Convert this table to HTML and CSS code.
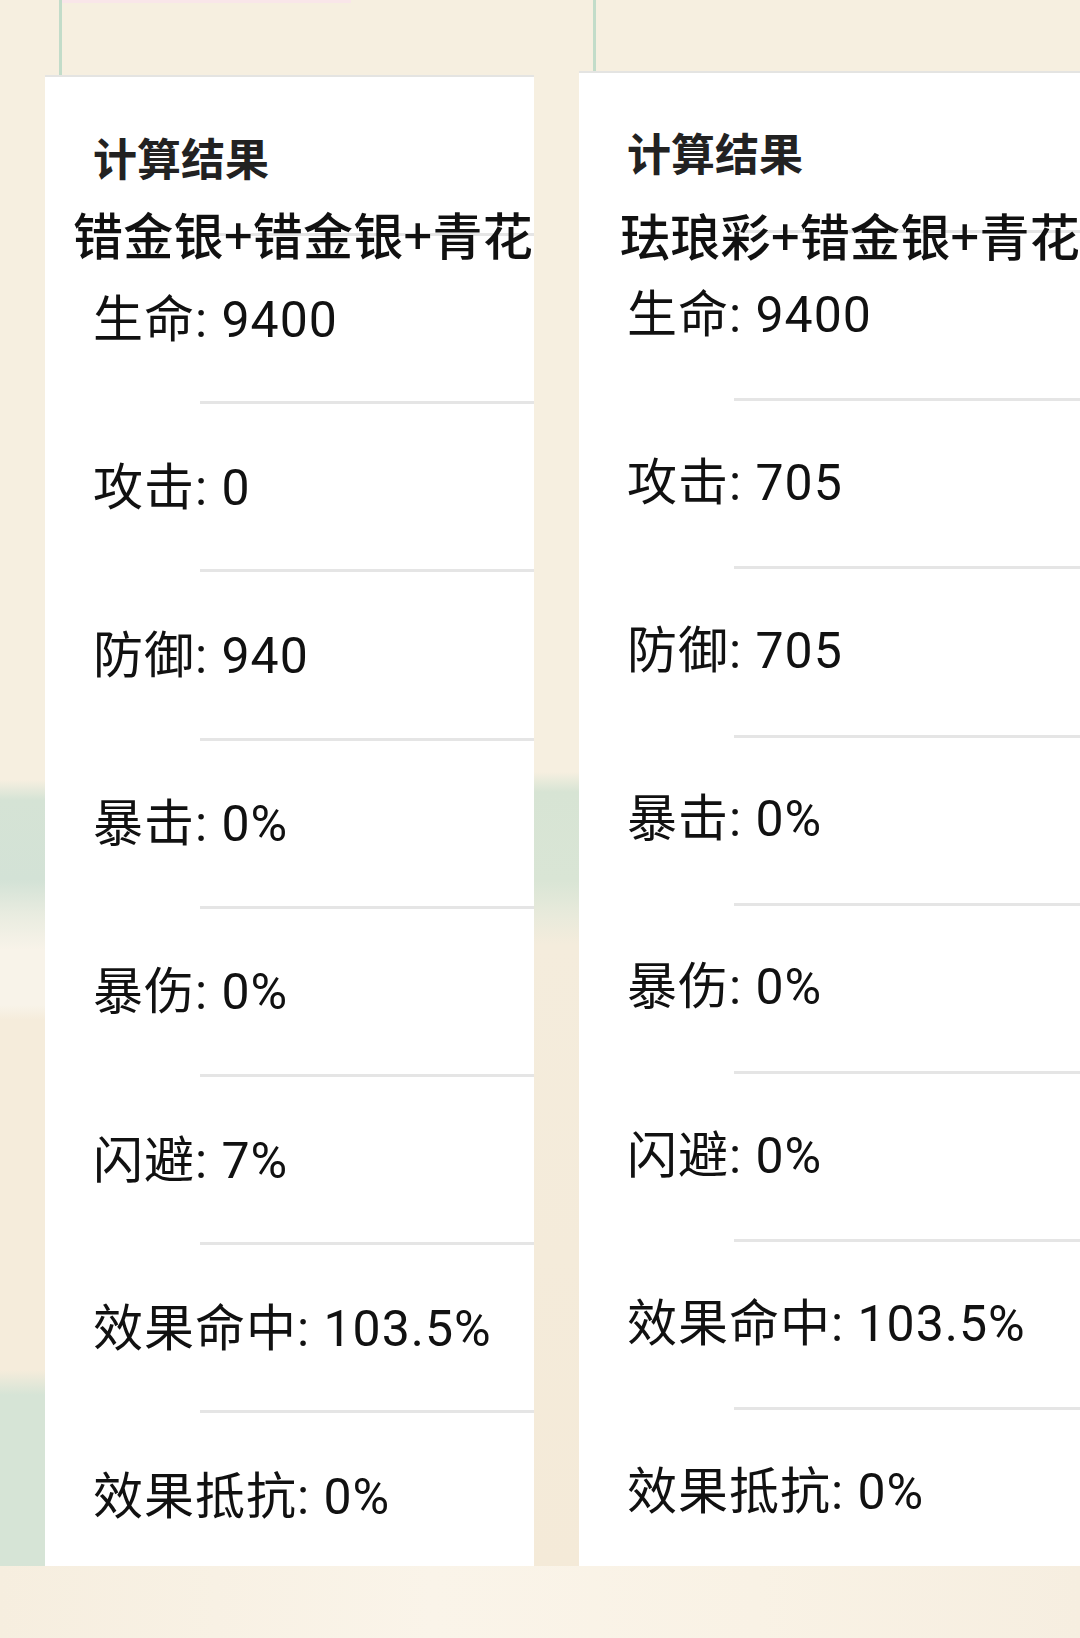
FILE: index.html
```html
<!DOCTYPE html>
<html lang="zh-CN">
<head>
<meta charset="utf-8">
<title>计算结果</title>
<link rel="stylesheet" href="styles.css">
</head>
<body>
<div class="page">
  <div class="col col-left">
    <div class="top-panel top-left"><div class="pink-edge"></div></div>
    <section class="card">
      <h2 class="title">计算结果</h2>
      <div class="combo">错金银+错金银+青花</div>
      <ul class="stats">
        <li class="stat">生命: 9400</li>
        <li class="stat">攻击: 0</li>
        <li class="stat">防御: 940</li>
        <li class="stat">暴击: 0%</li>
        <li class="stat">暴伤: 0%</li>
        <li class="stat">闪避: 7%</li>
        <li class="stat">效果命中: 103.5%</li>
        <li class="stat">效果抵抗: 0%</li>
      </ul>
    </section>
  </div>
  <div class="col col-right">
    <div class="top-panel top-right"></div>
    <section class="card card-right">
      <h2 class="title">计算结果</h2>
      <div class="combo">珐琅彩+错金银+青花</div>
      <ul class="stats">
        <li class="stat">生命: 9400</li>
        <li class="stat">攻击: 705</li>
        <li class="stat">防御: 705</li>
        <li class="stat">暴击: 0%</li>
        <li class="stat">暴伤: 0%</li>
        <li class="stat">闪避: 0%</li>
        <li class="stat">效果命中: 103.5%</li>
        <li class="stat">效果抵抗: 0%</li>
      </ul>
    </section>
  </div>
</div>
</body>
</html>
```
FILE: styles.css
```css
html, body {
  margin: 0;
  padding: 0;
}

body {
  width: 1080px;
  height: 1638px;
  overflow: hidden;
  background-color: #f6efe0;
  background-image:
    linear-gradient(to bottom, rgba(246,239,224,0) 0, rgba(246,239,224,0) 780px, #d5e3d5 800px, #d3e2d6 880px, #e9ece0 915px, #f8f3e9 950px, #f8f3e9 1005px, #f5ecdb 1020px, #f5ecdb 1370px, #d6e4d6 1395px, #d6e4d6 1566px, rgba(246,239,224,0) 1566px),
    linear-gradient(to bottom, rgba(246,239,224,0) 0, rgba(246,239,224,0) 772px, #d7e4d4 792px, #d9e5d5 880px, #e8eadb 915px, #f4ecdc 945px, #f4ead8 1566px, rgba(246,239,224,0) 1566px),
    linear-gradient(to right, #f6eedf 0, #faf4e9 40%, #f9f2e5 70%, #f6eee0 100%);
  background-repeat: no-repeat;
  background-position: 0 0, 534px 0, 0 1566px;
  background-size: 45px 1638px, 45px 1638px, 1080px 72px;
  font-family: Roboto, "Noto Sans CJK SC", sans-serif;
  color: #111;
}

.page {
  display: flex;
  gap: 45px;
  padding-left: 45px;
  height: 1566px;
}

.col {
  display: flex;
  flex-direction: column;
}

.col-left {
  width: 489px;
  flex: none;
}

.col-right {
  flex: 1;
  min-width: 0;
}

.top-panel {
  flex: none;
  border-left: 3px solid #c2dcc9;
}

.top-left {
  height: 75px;
  margin-left: 14px;
}

.pink-edge {
  width: 289px;
  height: 3px;
  background: #f9e6e9;
}

.top-right {
  height: 71px;
  margin-left: 14px;
}

.card {
  flex: 1;
  background: #fff;
  border-top: 2px solid #e4e4e2;
  overflow: hidden;
  padding-top: 58px;
}

.card-right {
  padding-top: 57px;
}

.title {
  margin: 0;
  padding-left: 48px;
  font-family: "Noto Sans CJK SC", sans-serif;
  font-size: 44px;
  line-height: 44px;
  font-weight: 700;
  color: #222;
}

.combo {
  margin-top: 29px;
  margin-bottom: -25px;
  padding-left: 28px;
  font-family: "Noto Sans CJK SC", Roboto, sans-serif;
  font-size: 50px;
  line-height: 50px;
  font-weight: 500;
  letter-spacing: 0.3px;
  white-space: nowrap;
  color: #111;
}

.card-right .combo {
  margin-top: 35px;
  margin-bottom: -29px;
  padding-left: 41px;
}

.stats {
  list-style: none;
  margin: 0;
  padding: 0;
}

.stat {
  height: 168.2px;
  box-sizing: border-box;
  display: flex;
  align-items: center;
  padding-left: 48px;
  padding-top: 5px;
  font-size: 50px;
  line-height: 50px;
  letter-spacing: 1px;
  white-space: nowrap;
  background-image: linear-gradient(#e5e5e5, #e5e5e5);
  background-repeat: no-repeat;
  background-position: 155px 0;
  background-size: calc(100% - 155px) 3px;
}

.card-right .stat {
  padding-top: 1px;
}
```
